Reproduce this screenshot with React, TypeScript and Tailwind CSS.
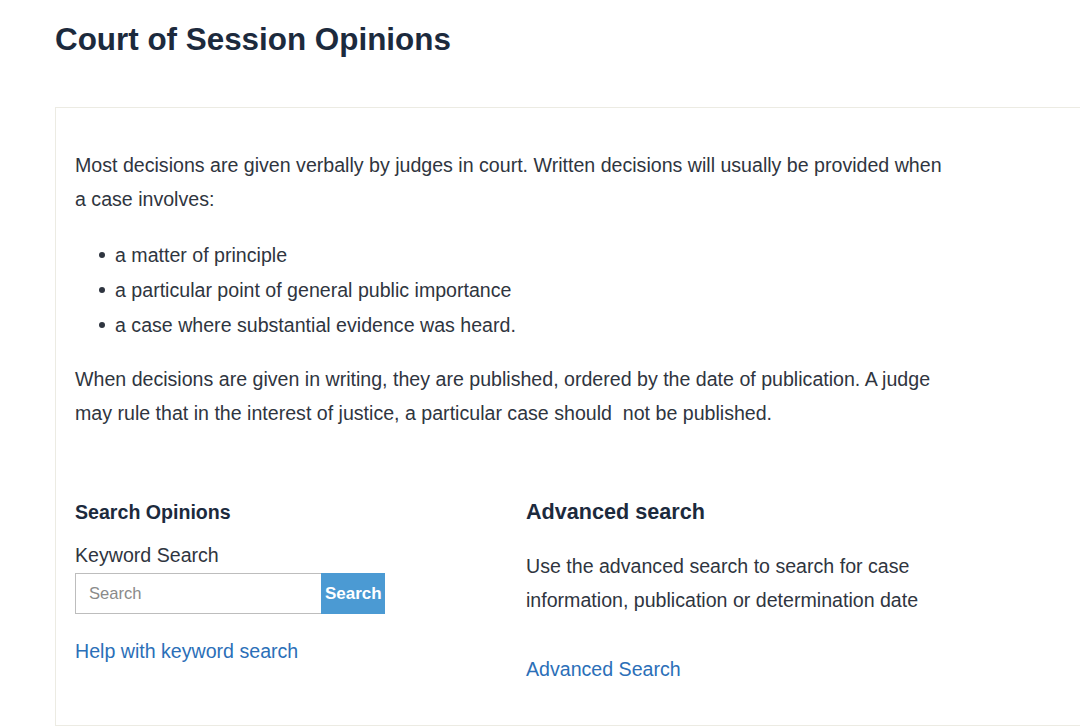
export default function App() {
  return (
    <div className="min-h-[728px] bg-white font-['Liberation_Sans',Arial,sans-serif] text-[#2f3540]">
      <div className="pl-[55px] pt-[20px]">
        <h1 className="text-[31.4px] font-bold leading-[40px] text-[#1c2a3d]">Court of Session Opinions</h1>
        <div className="mt-[47px] border border-[#ecebe3] border-r-0 pl-[19px] pt-[40px] pb-[40px] h-[619px]">
          <div className="w-[878px] text-[19.6px] leading-[34px]">
            <p>
              Most decisions are given verbally by judges in court. Written decisions will usually be provided when a case involves:
            </p>
            <ul className="mt-[22px] pl-[24px] space-y-[1px]">
              {['a matter of principle', 'a particular point of general public importance', 'a case where substantial evidence was heard.'].map(t => (
                <li key={t} className="flex items-center gap-[10px]">
                  <span className="h-[6px] w-[6px] rounded-full bg-[#2f3540]" />
                  {t}
                </li>
              ))}
            </ul>
            <p className="mt-[20px]">
              When decisions are given in writing, they are published, ordered by the date of publication. A judge may rule that in the interest of justice, a particular case should&nbsp; not be published.
            </p>
          </div>
          <div className="mt-[67px] flex">
            <div className="w-[451px]">
              <h2 className="text-[19.6px] font-bold leading-[30px] text-[#1c2a3d]">Search Opinions</h2>
              <div className="mt-[14px] text-[19.6px] leading-[28px]">Keyword Search</div>
              <div className="mt-[4px] flex h-[41px] w-[310px]">
                <input
                  placeholder="Search"
                  className="h-full w-[246px] border border-[#bdbdbd] border-r-0 px-[13px] text-[16.6px] text-[#333] placeholder:text-[#8a8a8a] outline-none"
                />
                <button className="h-full w-[64px] overflow-hidden whitespace-nowrap bg-[#4b9ad3] pl-[4px] text-left text-[17px] font-bold text-white">Search</button>
              </div>
              <a href="#" className="mt-[23px] block text-[19.6px] leading-[28px] text-[#2b6fb8]">Help with keyword search</a>
            </div>
            <div>
              <h2 className="text-[21.6px] font-bold leading-[30px] text-[#1c2a3d]">Advanced search</h2>
              <p className="mt-[22px] w-[420px] text-[19.6px] leading-[34px]">
                Use the advanced search to search for case information, publication or determination date
              </p>
              <a href="#" className="mt-[38px] block text-[19.6px] leading-[28px] text-[#2b6fb8]">Advanced Search</a>
            </div>
          </div>
        </div>
      </div>
    </div>
  )
}
